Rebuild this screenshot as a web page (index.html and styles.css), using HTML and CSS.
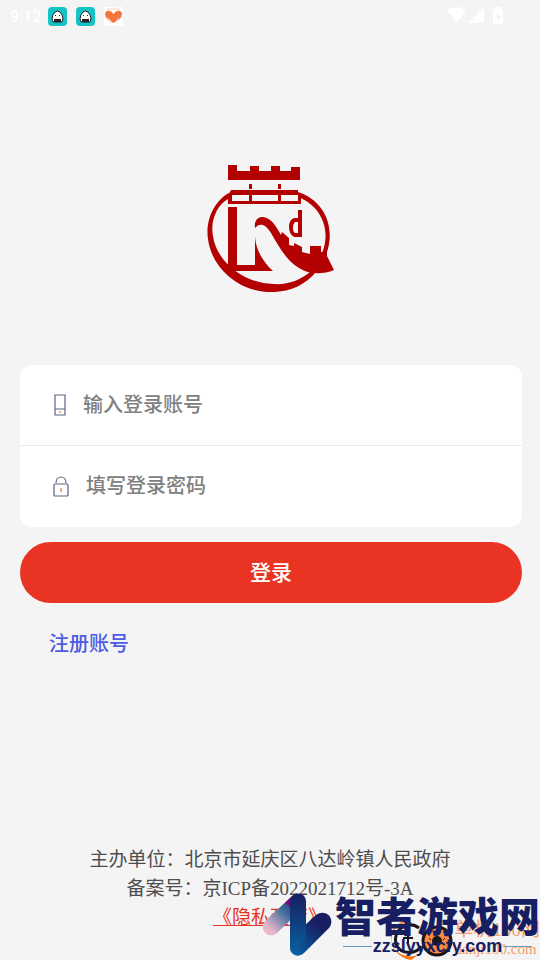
FILE: index.html
```
<!DOCTYPE html>
<html lang="zh-CN">
<head>
    <meta charset="UTF-8">
    <meta name="viewport" content="width=device-width, initial-scale=1.0">
    <title>登录</title>
    <link rel="stylesheet" href="styles.css">
</head>
<body>

<!-- Status bar -->
<header class="status-bar">
    <span class="status-time">9:12</span>
    <svg class="app-icon" viewBox="0 0 19 19">
        <rect width="19" height="19" rx="4" fill="#16c3c4"/>
        <path d="M4 12 Q4 8 7 5 Q9.500 3 12 5 Q15 8 15 12 L14 15 H5 Z" fill="#fff" stroke="#222" stroke-width="1"/>
        <path d="M6 12h7v3H6z" fill="#222"/>
        <path d="M7 8h1v1H7zM11 8h1v1h-1z" fill="#222"/>
    </svg>
    <svg class="app-icon" viewBox="0 0 19 19">
        <rect width="19" height="19" rx="4" fill="#16c3c4"/>
        <path d="M4 12 Q4 8 7 5 Q9.500 3 12 5 Q15 8 15 12 L14 15 H5 Z" fill="#fff" stroke="#222" stroke-width="1"/>
        <path d="M6 12h7v3H6z" fill="#222"/>
        <path d="M7 8h1v1H7zM11 8h1v1h-1z" fill="#222"/>
    </svg>
    <svg class="app-icon" viewBox="0 0 19 19">
        <rect width="19" height="19" fill="#fff"/>
        <path d="M3 3 Q9 0 16 3" fill="none" stroke="#fbe6cf" stroke-width="2"/>
        <path d="M9.500 16 L3 12 Q-1 6 3 4 Q7 3 9.500 7 Q12 3 16 4 Q20 6 16 12 Z" fill="#f4743f"/>
        <path d="M1 10 L7 17 M4 11 L8 16 M18 10 L12 17 M15 11 L11 16" stroke="#fde9de" stroke-width="1"/>
    </svg>
    <svg class="status-signals" viewBox="0 0 58 18">
        <path d="M0 3 Q9 -3 19 3 L9.500 16 Z" fill="#fff"/>
        <path d="M37 0 V16 H21 Z" fill="#fff"/>
        <path d="M46 2h3V0h5v2h2v15H46z" fill="#fff"/>
        <path d="M52 5l-4 5h3l-1 5 4-6h-3z" fill="#f0f0f0"/>
    </svg>
</header>

<main class="login">
    <svg class="logo" viewBox="-1 -1 130 130" role="img" aria-label="八达岭镇">
        <g fill="#b30000">
            <path d="M21 0h9v6h13V1h9v5h12V1h9v5h11V2h9v13H21z"/>
            <path d="M42 19h3v5h-3zM71 19h3v5h-3z"/>
            <path fill-rule="evenodd" d="M24 25H91v5h3v9H21V31zM25 30v6h17v-6zM45 30v6h26v-6zM74 30v6h17v-6z"/>
            <path d="M21 42h9v58h18V72C49 86 57 98 66 106H21z"/>
            <path fill-rule="evenodd" d="M91 45h4v27H87Q82 69 82 62Q82 55 87 53H91zM91 57h-3Q86 59 86 63Q86 67 88 68H91z"/>
            <path d="M48 63C47 55 51 52 56 52C65 53 70 63 74 70L75 67L82 73V80L87 81V78L95 82V87L103 89V81H114V87H120V91L127 105C115 110 101 109 92 103C80 96 72 82 64 68C58 58 52 58 48 63Z"/>
            <path fill-rule="evenodd" d="M24 27C8 34 -2 55 1 74C4 101 31 129 68 127C85 126 99 119 109 107L104 106C93 116 80 120 66 119C35 118 9 95 6 71C3 56 10 40 21 34Z"/>
            <path d="M91 27C116 35 130 61 119 90L115 88C125 64 113 40 91 32Z"/>
        </g>
    </svg>

    <form class="login-form" onsubmit="return false">
        <div class="input-card">
            <div class="input-group">
                <label for="account" aria-label="登录账号">
                    <svg class="input-icon" viewBox="0 0 20 24">
                        <path d="M5 2h10v20H5zM5 16h10" fill="none" stroke="#5d6284" stroke-width="1.200"/>
                        <path d="M10 18v2" stroke="#f04a40" stroke-width="1"/>
                    </svg>
                </label>
                <input type="text" id="account" placeholder="输入登录账号">
            </div>
            <div class="input-group">
                <label for="password" aria-label="登录密码">
                    <svg class="input-icon" viewBox="0 0 20 24">
                        <rect x="4" y="9" width="14" height="12" rx="1" fill="none" stroke="#5d6284" stroke-width="1.200"/>
                        <path d="M6 8C6 0 16 0 16 8" fill="none" stroke="#5d6284" stroke-width="1.200"/>
                        <path d="M11 13v4" stroke="#f04a40" stroke-width="1"/>
                    </svg>
                </label>
                <input type="password" id="password" class="input-password" placeholder="填写登录密码">
            </div>
        </div>
        <button type="submit" class="button-login">登录</button>
    </form>

    <a class="register-link" href="#">注册账号</a>
</main>

<footer class="footer">
    <p>主办单位：北京市延庆区八达岭镇人民政府</p>
    <p>备案号：京ICP备2022021712号-3A</p>
    <p><a class="privacy-link" href="#">《隐私政度》</a></p>
</footer>

<!-- Site marks over the bottom corner -->
<div class="danji-mark">
    <svg class="danji-icon" viewBox="0 0 64 40">
        <path d="M25 4C9 -3 -4 15 4 28C9 36 20 38 28 35L21 40C3 37 -4 18 5 7Q13 -2 25 4Z" fill="#ff7608"/>
        <path d="M29 8C17 -1 2 11 6 24C11 36 27 34 31 26" fill="none" stroke="#1a1518" stroke-width="3"/>
        <path d="M18 13v10M13 18h10" stroke="#1a1518" stroke-width="2"/>
        <circle cx="47" cy="21" r="14" fill="#fb8b43" stroke="#1a1518" stroke-width="3"/>
        <circle cx="47" cy="21" r="5" fill="#1a1518"/>
        <path d="M39 18l2 2M55 18l-2 2M39 25l2-1M55 25l-2-1" stroke="#1a1518" stroke-width="1"/>
    </svg>
    <div class="danji-text">
        <span class="danji-name">单机100网</span>
        <span class="danji-url">danji100.com</span>
    </div>
</div>
<div class="zhizhe-mark">
    <svg class="zhizhe-icon" viewBox="0 0 70 64">
        <defs>
            <linearGradient id="fade" x1="0" y1="1" x2="1" y2="0">
                <stop offset="0" stop-color="#f8bfc9"/>
                <stop offset="0.200" stop-color="#dfb5c8"/>
                <stop offset="0.600" stop-color="#3d6b9c"/>
                <stop offset="1" stop-color="#172164"/>
            </linearGradient>
            <linearGradient id="blue" x1="0" y1="1" x2="1" y2="0">
                <stop offset="0" stop-color="#096bab"/>
                <stop offset="0.700" stop-color="#171e61"/>
            </linearGradient>
            <linearGradient id="bar" x1="0" y1="0" x2="0" y2="1">
                <stop offset="0" stop-color="#171e61"/>
                <stop offset="1" stop-color="#08609e"/>
            </linearGradient>
        </defs>
        <path d="M2 28L27 5L38 17L14 40C6 47 -5 37 2 28Z" fill="url(#fade)"/>
        <path d="M22 10L29 3V15Z" fill="#8b0088"/>
        <path d="M28 45L53 22C63 15 73 26 66 35L41 60C34 66 27 61 27 54Z" fill="url(#blue)"/>
        <path d="M27 8C28 -2 43 -2 43 9V45L29 60Q27 58 27 54Z" fill="url(#bar)"/>
    </svg>
    <div class="zhizhe-text">
        <span class="zhizhe-name">智者游戏网</span>
        <span class="zhizhe-url">zzslyyxcfy.com</span>
    </div>
</div>

</body>
</html>
```
FILE: styles.css
```
* {
    box-sizing: border-box;
}
body {
    display: flex;
    flex-direction: column;
    position: relative;
    min-height: 100vh;
    margin: 0;
    overflow: hidden;
    background: #f4f4f4;
    color: #4d4d4d;
    font-family: "Liberation Serif", "Noto Sans CJK SC", sans-serif;
}
.status-bar {
    display: flex;
    align-items: center;
    gap: 9px;
    height: 32px;
    padding: 0 35px 0 10px;
}
.status-time {
    width: 29px;
    color: #fff;
    font: 500 16px Roboto, sans-serif;
    white-space: nowrap;
}
.app-icon {
    width: 19px;
    height: 19px;
}
.status-signals {
    width: 58px;
    height: 18px;
    margin-left: auto;
}
.login {
    display: flex;
    flex-direction: column;
    padding: 132px 18px 0 20px;
}
.logo {
    align-self: center;
    width: 130px;
    height: 130px;
}
.login-form {
    display: flex;
    flex-direction: column;
    gap: 15px;
    margin-top: 71px;
}
.input-card {
    background: #fff;
    border-radius: 12px;
}
.input-group {
    display: flex;
    align-items: center;
    height: 81px;
    padding: 0 30px;
}
.input-group:first-child {
    border-bottom: 1px solid #ececec;
}
.input-icon {
    display: block;
    width: 20px;
    height: 24px;
}
.input-group input {
    flex: 1;
    min-width: 0;
    padding: 0 0 0 13px;
    border: none;
    outline: none;
    background: transparent;
    font-family: inherit;
    font-size: 20px;
    font-weight: 500;
}
.input-group .input-password {
    padding-left: 16px;
}
.input-group input::placeholder {
    color: #808080;
}
.button-login {
    height: 61px;
    padding: 0 0 4px;
    border: none;
    border-radius: 31px;
    background: #e93323;
    color: #fff;
    font-family: inherit;
    font-size: 21px;
    font-weight: 500;
    cursor: pointer;
}
.register-link {
    align-self: flex-start;
    margin: 26px 0 0 29px;
    color: #4d5be6;
    font-size: 20px;
    font-weight: 500;
    line-height: 30px;
    text-decoration: none;
}
.footer {
    margin-top: auto;
    padding-bottom: 28px;
    font-size: 19px;
    line-height: 29px;
    text-align: center;
}
.footer p {
    margin: 0;
}
.privacy-link {
    color: #e93323;
}
.danji-mark {
    display: flex;
    position: absolute;
    right: 0;
    bottom: 0;
    color: #f79b69;
}
.danji-icon {
    width: 64px;
    height: 40px;
}
.danji-text {
    display: flex;
    flex-direction: column;
    white-space: nowrap;
}
.danji-name {
    font-size: 19px;
    line-height: 20px;
}
.danji-url {
    font-size: 15px;
    line-height: 18px;
}
.zhizhe-mark {
    display: flex;
    gap: 2px;
    position: absolute;
    right: 0;
    bottom: 3px;
    color: #171e61;
}
.zhizhe-icon {
    width: 70px;
    height: 64px;
}
.zhizhe-text {
    display: flex;
    flex-direction: column;
}
.zhizhe-name {
    font: 900 41px/43px "Noto Sans CJK SC", sans-serif;
    white-space: nowrap;
}
.zhizhe-url {
    display: flex;
    align-items: center;
    gap: 1px;
    padding: 0 8px;
    font: bold 18px/20px "Liberation Sans", sans-serif;
}
.zhizhe-url::before,
.zhizhe-url::after {
    content: "";
    flex: 1;
    border-top: 1px solid #6698c0;
}
```
